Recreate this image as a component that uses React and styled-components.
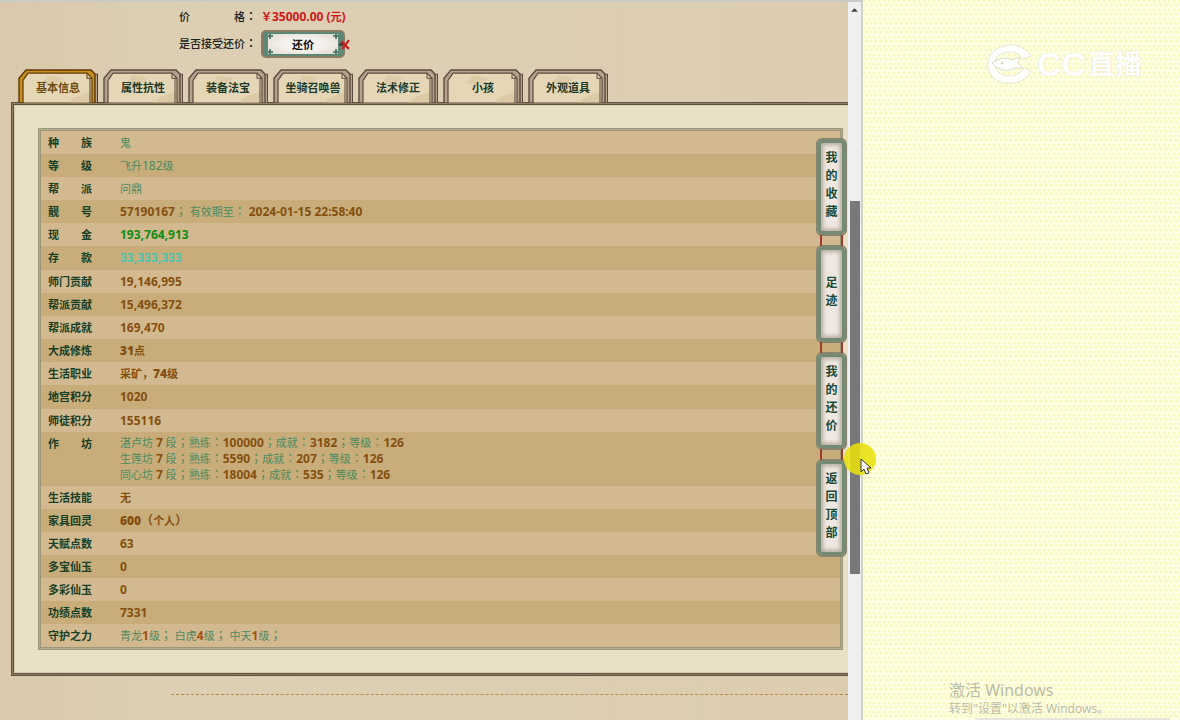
import React, { useState } from "react";
import styled, { createGlobalStyle } from "styled-components";

const TABS = [
  "基本信息",
  "属性抗性",
  "装备法宝",
  "坐骑召唤兽",
  "法术修正",
  "小孩",
  "外观道具",
];

const SIDE_LINKS = ["我的收藏", "足迹", "我的还价", "返回顶部"];

const WORKSHOPS = [
  { name: "湛卢坊", stage: 7, skill: 100000, score: 3182, level: 126 },
  { name: "生莲坊", stage: 7, skill: 5590, score: 207, level: 126 },
  { name: "同心坊", stage: 7, skill: 18004, score: 535, level: 126 },
];

//full-width punctuation sits in the middle of its cell
const Text = ({ children }) =>
  children
    .split(/([；：（）])/)
    .map((part, i) => (i % 2 ? <Mark key={i}>{part}</Mark> : part));

const GUARD_COLOR = "#a4500f";

const getRows = () => [
  { label: "种　　族", value: "鬼" },
  {
    label: "等　　级",
    value: (
      <>
        飞升<Digits>182</Digits>级
      </>
    ),
  },
  { label: "帮　　派", value: "问鼎" },
  {
    label: "靓　　号",
    value: (
      <>
        <Num>57190167</Num>
        <Text>； 有效期至： </Text>
        <Num>2024-01-15 22:58:40</Num>
      </>
    ),
  },
  { label: "现　　金", value: <Num $color="#128c12">193,764,913</Num> },
  { label: "存　　款", value: <Num $color="#4cc5b0">33,333,333</Num> },
  { label: "师门贡献", value: <Num>19,146,995</Num> },
  { label: "帮派贡献", value: <Num>15,496,372</Num> },
  { label: "帮派成就", value: <Num>169,470</Num> },
  {
    label: "大成修炼",
    value: (
      <Strong>
        <Num>31</Num>点
      </Strong>
    ),
  },
  {
    label: "生活职业",
    value: (
      <Strong>
        采矿，<Num>74</Num>级
      </Strong>
    ),
  },
  { label: "地宫积分", value: <Num>1020</Num> },
  { label: "师徒积分", value: <Num>155116</Num> },
  {
    label: "作　　坊",
    value: WORKSHOPS.map((w) => (
      <Workshop key={w.name}>
        {w.name} <Num>{w.stage}</Num>
        <Text> 段；熟练：</Text>
        <Num>{w.skill}</Num>
        <Text>；成就：</Text>
        <Num>{w.score}</Num>
        <Text>；等级：</Text>
        <Num>{w.level}</Num>
      </Workshop>
    )),
  },
  { label: "生活技能", value: <Strong>无</Strong> },
  {
    label: "家具回灵",
    value: (
      <Strong>
        <Num>600</Num>
        <Text>（个人）</Text>
      </Strong>
    ),
  },
  { label: "天赋点数", value: <Num>63</Num> },
  { label: "多宝仙玉", value: <Num>0</Num> },
  { label: "多彩仙玉", value: <Num>0</Num> },
  { label: "功绩点数", value: <Num>7331</Num> },
  {
    label: "守护之力",
    value: (
      <>
        青龙<Num $color={GUARD_COLOR}>1</Num>
        <Text>级； 白虎</Text>
        <Num $color={GUARD_COLOR}>4</Num>
        <Text>级； 中天</Text>
        <Num $color={GUARD_COLOR}>1</Num>
        <Text>级；</Text>
      </>
    ),
  },
];

const TabShape = ({ active }) => {
  const line = active ? "#5d3a08" : "#5d4a3e";
  const band = active ? "#c98e22" : "#b5a28e";
  return (
    <svg viewBox="0 0 80 33" preserveAspectRatio="none" aria-hidden="true">
      <path d="M72 5H79.5V33H72Z" fill="#b5a28e" stroke={line} />
      <path
        d="M1 33V9L8 1H73L77 5V33Z"
        fill={band}
        stroke={line}
        strokeWidth="1.4"
      />
      <path
        d="M5 33V11L10 4H69L74 9V33Z"
        fill="#e5d6b5"
        stroke={line}
        strokeWidth="1.2"
      />
      <path d="M30 6L46 9L34 16L24 13Z" fill="#cdb88f" opacity=".35" />
      <path d="M50 33L58 27L73 22V33Z" fill="#cbb287" opacity=".35" />
      <path d="M69 4V9H74M72 9V33" stroke={line} fill="none" />
    </svg>
  );
};

const Cursor = () => (
  <Pointer viewBox="0 0 34 34" aria-hidden="true">
    <circle cx="17" cy="16" r="16" fill="#e8e00c" opacity=".88" />
    <path
      d="M18 16V29L21 26L23 31L26 30L24 25H28Z"
      fill="#fff"
      stroke="#333"
      strokeWidth="1"
    />
  </Pointer>
);

const App = () => {
  const [tab, setTab] = useState(0);

  return (
    <Screen>
      <GlobalStyle />
      <Browser>
        <Page>
          <Info>
            <InfoRow>
              <InfoLabel>
                <Text>价　　　　格：</Text>
              </InfoLabel>
              <Price>
                ￥<Digits>35000.00 (</Digits>元<Digits>)</Digits>
              </Price>
            </InfoRow>
            <InfoRow>
              <InfoLabel>
                <Text>是否接受还价：</Text>
              </InfoLabel>
              <BargainButton type="button">
                <BargainFace>
                  <svg
                    viewBox="0 0 70 20"
                    preserveAspectRatio="none"
                    aria-hidden="true"
                  >
                    <path
                      d="M0 2H5M2 0V5M65 2H70M68 0V5M0 18H5M2 15V20M65 18H70M68 15V20"
                      stroke="#3f6b5c"
                      strokeWidth="1.6"
                    />
                  </svg>
                  还价
                </BargainFace>
                <Cross viewBox="0 0 10 10" aria-hidden="true">
                  <path d="M2 2L9 9M9 1L3 9" stroke="#c81c1c" strokeWidth="2" />
                  <path d="M0 5H4" stroke="#5b2a22" strokeWidth="2" />
                </Cross>
              </BargainButton>
            </InfoRow>
          </Info>
          <Tabs>
            {TABS.map((name, i) => (
              <Tab
                key={name}
                type="button"
                $active={i === tab}
                onClick={() => setTab(i)}
              >
                <TabShape active={i === tab} />
                <span>{name}</span>
              </Tab>
            ))}
          </Tabs>
          <Panel>
            <Sheet>
              <tbody>
                {getRows().map((row) => (
                  <Row key={row.label}>
                    <th scope="row">{row.label}</th>
                    <td>{row.value}</td>
                  </Row>
                ))}
              </tbody>
            </Sheet>
          </Panel>
          <Divider />
          <SideNav>
            {SIDE_LINKS.map((name) => (
              <SideLink key={name} href="#">
                <SideName>{name}</SideName>
              </SideLink>
            ))}
          </SideNav>
        </Page>
        <Scrollbar>
          <svg viewBox="0 0 8 4" aria-hidden="true">
            <path d="M0 4L4 0L8 4Z" fill="#444" />
          </svg>
          <Thumb />
        </Scrollbar>
        <Cursor />
      </Browser>
      <Desktop>
        <Brand>
          <svg viewBox="0 0 46 42" aria-hidden="true">
            <path
              d="M44 13C38 3 26 0 17 3C5 6 0 14 1 23C2 34 11 41 23 40C33 40 40 36 44 28L37 25C33 31 28 33 22 33C13 33 8 28 8 21C8 13 14 9 22 9C29 9 33 11 36 16Z"
              fill="#fff"
              stroke="#dcdcc8"
              strokeWidth=".7"
            />
            <path
              d="M5 20C12 15 19 14 25 17L33 14L31 20L36 25L28 25C21 29 12 28 5 20Z"
              fill="#fff"
              stroke="#d2d2bd"
              strokeWidth=".8"
            />
            <circle cx="15" cy="20" r="1.5" fill="#dadac4" />
          </svg>
          <BrandLatin>CC</BrandLatin>
          <BrandName>直播</BrandName>
        </Brand>
        <Notice>
          <NoticeTitle>激活 Windows</NoticeTitle>
          <NoticeText>转到"设置"以激活 Windows。</NoticeText>
          <Strip />
        </Notice>
      </Desktop>
    </Screen>
  );
};

const GlobalStyle = createGlobalStyle`
  * {
    box-sizing: border-box;
  }
  body {
    margin: 0;
    font-family: "Noto Sans", "Noto Sans CJK SC", sans-serif;
    font-size: 11px;
    line-height: 15px;
  }
  button {
    font-family: inherit;
    cursor: pointer;
  }
`;

const Screen = styled.div`
  display: flex;
  min-height: 100vh;
  overflow: hidden;
`;

const Browser = styled.div`
  position: relative;
  flex: 1;
  min-width: 0;
  display: flex;
  border-top: 2px solid #cbcaca;
  border-right: 2px solid #d3d2c2;
`;

const Page = styled.main`
  position: relative;
  flex: 1;
  min-width: 0;
  overflow: hidden;
  background: linear-gradient(90deg, #dac9ac, #dccfb3 20%, #dccdb1);
`;

const Digits = styled.span`
  font-size: 12px;
`;

const Num = styled.b`
  color: ${(props) => props.$color || "#85500f"};
  font-size: 12px;
  line-height: 15px;
`;

const Strong = styled.span`
  color: #85500f;
  font-weight: 600;
`;

const Mark = styled.span`
  font-family: "Noto Sans CJK TC", sans-serif;
  font-size: 12px;
  line-height: 8px;
`;

const Workshop = styled.div`
  line-height: 16px;
`;

const Info = styled.div`
  padding: 1px 0 0 179px;
`;

const InfoRow = styled.div`
  display: flex;
  align-items: center;
  height: 27px;
`;

const InfoLabel = styled.span`
  width: 82px;
  color: #222;
  font-weight: 500;
`;

const Price = styled.strong`
  color: #cf1717;
`;

const BargainButton = styled.button`
  position: relative;
  width: 84px;
  height: 28px;
  padding: 2px 5px;
  border: 2px solid #8a7a66;
  border-radius: 5px;
  background: #5d8875;
`;

const BargainFace = styled.span`
  position: relative;
  display: flex;
  align-items: center;
  justify-content: center;
  height: 20px;
  background: radial-gradient(#f6f3ef 40%, #ded8ce);
  color: #111;
  font-size: 11px;
  font-weight: 700;

  svg {
    position: absolute;
    inset: 0;
    width: 100%;
    height: 100%;
  }
`;

const Cross = styled.svg`
  position: absolute;
  right: -7px;
  top: 7px;
  width: 11px;
  height: 11px;
`;

const Tabs = styled.div`
  display: flex;
  gap: 5px;
  padding: 12px 0 0 18px;
`;

const Tab = styled.button`
  position: relative;
  flex: none;
  width: 80px;
  height: 34px;
  padding: 2px 0 0;
  border: 0;
  background: none;
  color: ${(props) => (props.$active ? "#6e4a0c" : "#1c3a2b")};
  font-size: 11px;
  font-weight: 700;

  svg {
    position: absolute;
    inset: 0;
    width: 100%;
    height: 100%;
  }
  span {
    position: relative;
  }
`;

const Panel = styled.section`
  margin: -1px -10px 0 11px;
  padding: 23px 12px 23px 24px;
  border: 3px double #5f5340;
  background: #eae0c5;
  box-shadow: inset 0 0 0 1px #d9cdb0;
  outline: 1px solid #8b7d66;
  outline-offset: -2px;
`;

const Sheet = styled.table`
  width: 100%;
  border: 3px double #9c9778;
  outline: 1px solid #b3ad8f;
  outline-offset: -2px;
  border-spacing: 0;
  border-collapse: separate;
`;

const Row = styled.tr`
  background: #d3b98f;

  &:nth-child(even) {
    background: #c8ad7a;
  }
  th,
  td {
    padding: 4px 0;
    vertical-align: top;
    text-align: left;
  }
  &:nth-child(6) td,
  &:nth-child(12) td {
    padding-bottom: 5px;
  }
  th {
    width: 79px;
    padding-left: 7px;
    color: #173f27;
    font-weight: 700;
  }
  td {
    color: #4c8a5f;
  }
  td:has(div) {
    padding: 3px 0;
  }
`;

const Divider = styled.hr`
  margin: 18px 0 0 171px;
  border: 0;
  border-top: 1px dashed #bf8b3e;
`;

const SideNav = styled.nav`
  position: absolute;
  top: 136px;
  right: 1px;
  display: flex;
  flex-direction: column;
  gap: 9px;
  width: 31px;
`;

const SideLink = styled.a`
  position: relative;
  display: flex;
  align-items: center;
  justify-content: center;
  height: 98px;
  padding-bottom: 4px;
  border: 2px solid #858570;
  border-radius: 6px;
  background: #efe7e1;
  box-shadow: inset 0 0 0 3px #738b72, inset 0 0 4px 5px #b5aa9d;
  color: #174a36;
  text-decoration: none;

  /* cords that hang one plate under the next */
  & + &::before {
    content: "";
    position: absolute;
    top: -12px;
    left: 2px;
    right: 2px;
    height: 11px;
    border: solid #a03a2a;
    border-width: 0 2px;
  }
`;

const SideName = styled.span`
  width: 12px;
  font-size: 12px;
  font-weight: 700;
  line-height: 18px;
  word-break: break-all;
`;

const Scrollbar = styled.div`
  display: flex;
  flex-direction: column;
  align-items: center;
  width: 13px;
  background: #f0eff0;

  svg {
    width: 7px;
    height: 4px;
    margin-top: 6px;
  }
`;

const Thumb = styled.div`
  width: 10px;
  height: 52%;
  margin-top: 189px;
  background: #787779;
`;

const Pointer = styled.svg`
  position: absolute;
  top: 441px;
  right: -16px;
  z-index: 2;
  width: 34px;
  height: 34px;
`;

const Desktop = styled.aside`
  display: flex;
  flex-direction: column;
  justify-content: space-between;
  width: 317px;
  background-color: #ffffe3;
  background-image: radial-gradient(circle at 1px 1px, #f8f8bc 1px, transparent 2px),
    radial-gradient(circle at 3px 5px, #f8f8bc 1px, transparent 2px);
  background-size: 5px 9px;
`;

const Brand = styled.div`
  display: flex;
  align-items: center;
  padding: 43px 0 0 124px;
  color: #fff;
  font-weight: 700;
  text-shadow: 0 0 1px #c8c8b4;

  svg {
    width: 46px;
    height: 42px;
    margin-right: 4px;
  }
`;

const BrandLatin = styled.span`
  font-family: "Liberation Sans", sans-serif;
  font-size: 34px;
  line-height: 42px;
`;

const BrandName = styled.span`
  margin-left: 2px;
  font-size: 27px;
  line-height: 42px;
`;

const Notice = styled.div`
  padding-left: 86px;
  color: #bcbca8;
`;

const NoticeTitle = styled.div`
  font-size: 16px;
  line-height: 22px;
`;

const NoticeText = styled.div`
  font-size: 12px;
  line-height: 16px;
`;

const Strip = styled.div`
  height: 2px;
  margin: 1px 10px 0 26px;
  background: #e6e5dc;
`;

export default App;
